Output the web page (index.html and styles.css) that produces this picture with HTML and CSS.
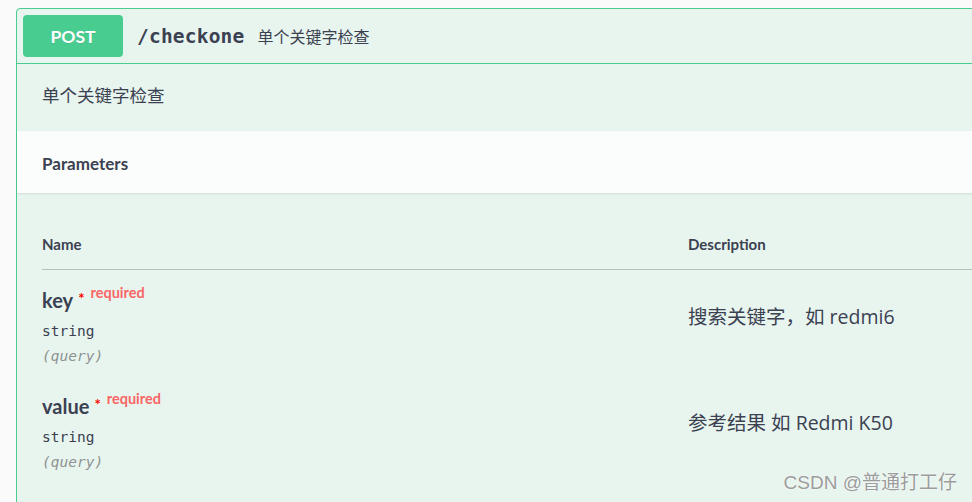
FILE: index.html
```html
<!DOCTYPE html>
<html lang="zh-CN">
<head>
<meta charset="UTF-8" />
<meta name="viewport" content="width=device-width, initial-scale=1" />
<link rel="stylesheet" href="styles.css">
</head>
<body>

<div class="opblock opblock-post">
  <div class="opblock-summary">
    <span class="opblock-summary-method">POST</span>
    <span class="opblock-summary-path">/checkone</span>
    <span class="opblock-summary-description">单个关键字检查</span>
  </div>

  <div class="opblock-description">单个关键字检查</div>

  <div class="opblock-section-header">
    <h4 class="opblock-title">Parameters</h4>
  </div>

  <div class="table-container">
    <table class="parameters">
      <thead>
        <tr>
          <th class="col-name">Name</th>
          <th class="col-description">Description</th>
        </tr>
      </thead>
      <tbody>
        <tr>
          <td class="col-name">
            <div class="parameter-name">key<span class="required-star">*</span><span class="required">required</span></div>
            <div class="parameter-type">string</div>
            <div class="parameter-in">(query)</div>
          </td>
          <td class="col-description">搜索关键字，如 redmi6</td>
        </tr>
        <tr>
          <td class="col-name">
            <div class="parameter-name">value<span class="required-star">*</span><span class="required">required</span></div>
            <div class="parameter-type">string</div>
            <div class="parameter-in">(query)</div>
          </td>
          <td class="col-description">参考结果 如 Redmi K50</td>
        </tr>
      </tbody>
    </table>
  </div>
</div>

<div class="watermark">CSDN @普通打工仔</div>

</body>
</html>
```

FILE: styles.css
```css
body {
  margin: 0;
  padding: 8px 0 0 16px;
  background: #fafafa;
  color: #3b4151;
  font-family: Lato, "Noto Sans CJK SC", sans-serif;
  overflow: hidden;
  height: 494px;
}

.opblock {
  width: 1000px;
  height: 600px;
  border: 1px solid #49cc90;
  border-radius: 4px;
  background: #e8f5ef;
}

.opblock-summary {
  display: flex;
  align-items: center;
  padding: 6px;
  border-bottom: 1px solid #49cc90;
}

.opblock-summary-method {
  width: 100px;
  height: 42px;
  display: flex;
  align-items: center;
  justify-content: center;
  background: #49cc90;
  color: #fff;
  border-radius: 4px;
  font-size: 17.5px;
  font-weight: 700;
  text-shadow: 0 1px 0 rgba(0, 0, 0, 0.1);
}

.opblock-summary-path {
  margin-left: 14px;
  font-family: "DejaVu Sans Mono", monospace;
  font-size: 19.5px;
  font-weight: 600;
  letter-spacing: 0.2px;
}

.opblock-summary-description {
  margin-left: 13px;
  font-family: "Noto Sans CJK SC", sans-serif;
  font-size: 16px;
}

.opblock-description {
  padding: 19px 25px 24px;
  line-height: 24px;
  font-family: "Open Sans", "Noto Sans CJK SC", sans-serif;
  font-size: 17.5px;
}

.opblock-section-header {
  display: flex;
  align-items: center;
  height: 62px;
  padding: 3px 25px 0;
  box-sizing: border-box;
  background: #fafdfc;
  box-shadow: 0 1px 2px rgba(0, 0, 0, 0.1);
}

.opblock-title {
  margin: 0;
  font-size: 17px;
  font-weight: 700;
}

.table-container {
  padding: 26px 25px 25px;
}

.parameters {
  border-collapse: collapse;
  width: 950px;
}

.parameters th {
  text-align: left;
  padding: 15px 0;
  line-height: 20px;
  font-size: 15px;
  font-weight: 700;
  border-bottom: 1px solid #b6c0bd;
}

.parameters .col-name {
  width: 646px;
}

.parameters td {
  vertical-align: top;
  padding: 15px 0 7px;
}

.parameter-name {
  line-height: 30px;
  font-size: 20px;
  font-weight: 700;
}

.required-star {
  color: #f00;
  font-size: 15px;
  margin-left: 5px;
  position: relative;
  top: -4px;
}

.required {
  color: #f86666;
  font-size: 14.5px;
  font-weight: 700;
  margin-left: 6px;
  position: relative;
  top: -10px;
}

.parameter-type,
.parameter-in {
  line-height: 25px;
  font-family: "DejaVu Sans Mono", monospace;
  font-size: 14.5px;
}

.parameter-type {
  margin-top: 1px;
}

.parameter-in {
  color: #8e9291;
  font-style: italic;
}

.parameters td.col-description {
  padding-top: 32px;
  line-height: 30px;
  font-family: "Open Sans", "Noto Sans CJK SC", sans-serif;
  font-size: 19.5px;
}

.watermark {
  position: absolute;
  right: 15px;
  bottom: 8px;
  font-family: "Liberation Sans", "Noto Sans CJK SC", sans-serif;
  font-size: 19px;
  color: #9c9c9c;
  text-shadow: 0 0 2px #fff;
}
```
